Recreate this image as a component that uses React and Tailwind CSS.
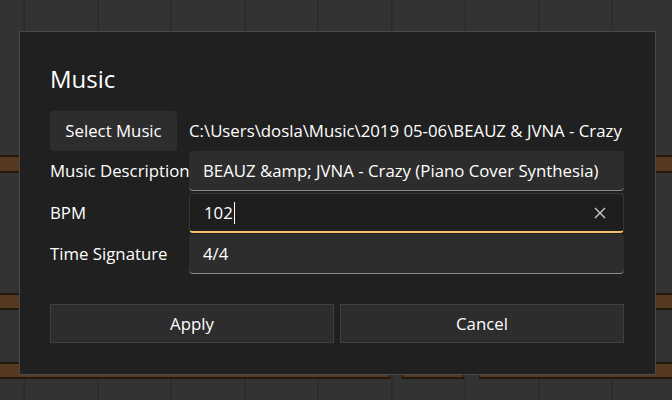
import React from 'react';

const gridLines = [24, 97.5, 171, 244.5, 318, 391.5, 465, 538.5, 612];

const notes = [
  { x: -4, y: 155, w: 680, h: 17 },
  { x: -4, y: 293, w: 680, h: 16 },
  { x: -4, y: 362, w: 394, h: 16 },
  { x: 402, y: 362, w: 62, h: 16 },
  { x: 479, y: 362, w: 200, h: 16 },
];

function PianoRoll() {
  return (
    <svg className="absolute inset-0" width="672" height="400" viewBox="0 0 672 400">
      <rect x="0" y="0" width="672" height="400" fill="#333333" />
      {gridLines.map((x) => (
        <rect key={x} x={x - 0.5} y="0" width="1.5" height="400" fill="#2b2b2b" />
      ))}
      {notes.map((n, i) => (
        <g key={i}>
          <rect x={n.x} y={n.y} width={n.w} height={n.h + 1} fill="#23180e" />
          <rect x={n.x + 1} y={n.y + 2} width={n.w - 2} height={n.h - 3} fill="#563922" />
        </g>
      ))}
    </svg>
  );
}

export default function App() {
  return (
    <div
      className="relative h-[400px] w-[672px] overflow-hidden bg-[#333333] text-[16.8px] text-white"
      style={{ fontFamily: '"Open Sans", "Noto Sans", sans-serif' }}
    >
      <PianoRoll />

      <div className="absolute left-[19px] top-[31px] flex h-[344px] w-[637px] flex-col border border-[#4a4a4a] bg-[#202020] pb-[31px] pl-[30px] pr-[31px] pt-[31px]">
        <h1 className="h-[32px] text-[24px] font-normal leading-[32px]">Music</h1>

        <div className="mt-[16px] grid grid-cols-[139px_1fr]">
          <div className="flex h-[40px] items-center">
            <button className="flex h-[40px] w-[127px] items-center justify-center rounded-[4px] bg-[#2d2d2d] text-white">
              Select Music
            </button>
          </div>
          <div className="flex h-[40px] items-center overflow-hidden whitespace-nowrap">
            C:\Users\dosla\Music\2019 05-06\BEAUZ &amp; JVNA - Crazy (Piano Cover Synthesia).mp3
          </div>

          <div className="flex items-center whitespace-nowrap">Music Description</div>
          <div className="flex h-[40px] items-center overflow-hidden whitespace-nowrap rounded-[4px] border-b border-[#8a8a8a] bg-[#2d2d2d] pl-[14px]">
            BEAUZ &amp;amp; JVNA - Crazy (Piano Cover Synthesia)
          </div>

          <div className="mt-[2px] flex items-center">BPM</div>
          <div className="mt-[2px] flex h-[40px] items-center rounded-[4px] border border-b-2 border-[#363636] border-b-[#f5c26b] bg-[#1e1e1e] pl-[14px] pr-[16px]">
            <span>102</span>
            <span className="ml-[1px] h-[22px] w-px bg-white" />
            <span className="flex-1" />
            <svg width="12" height="12" viewBox="0 0 12 12" className="mr-[1px]">
              <path d="M1 1 L11 11 M11 1 L1 11" stroke="#cfcfcf" strokeWidth="1.3" fill="none" />
            </svg>
          </div>

          <div className="mt-[1px] flex items-center">Time Signature</div>
          <div className="mt-[1px] flex h-[40px] items-center rounded-[4px] border-b border-[#8a8a8a] bg-[#2d2d2d] pl-[14px]">
            4/4
          </div>
        </div>

        <div className="mt-auto grid grid-cols-2 gap-[6px]">
          <button className="h-[39px] border border-[#404040] bg-[#2d2d2d] text-white">Apply</button>
          <button className="h-[39px] border border-[#404040] bg-[#2d2d2d] text-white">Cancel</button>
        </div>
      </div>
    </div>
  );
}
